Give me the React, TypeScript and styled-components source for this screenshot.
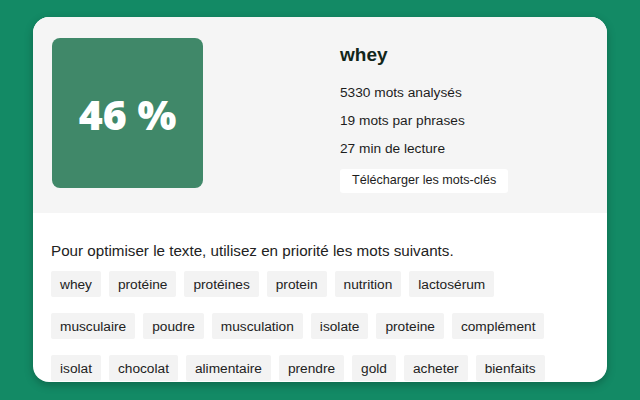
import React from "react";
import styled, { createGlobalStyle } from "styled-components";

const GlobalStyle = createGlobalStyle`
  html, body {
    margin: 0;
    padding: 0;
    background: #138a65;
    font-family: "Liberation Sans", Arial, sans-serif;
  }
`;

const StyledPage = styled.div`
  width: 640px;
  height: 400px;
  padding: 17px 33px 18px 33px;
  box-sizing: border-box;
`;

const StyledCard = styled.div`
  width: 574px;
  height: 365px;
  border-radius: 16px;
  overflow: hidden;
  background: #fff;
  box-shadow: 0 3px 8px rgba(0, 0, 0, 0.25);
  display: flex;
  flex-direction: column;
`;

const StyledTop = styled.div`
  display: flex;
  align-items: flex-start;
  height: 196px;
  box-sizing: border-box;
  flex-shrink: 0;
  background: #f5f5f5;
  padding: 21px 19px 0 19px;
  gap: 137px;
`;

const StyledScore = styled.div`
  width: 151px;
  height: 150px;
  border-radius: 8px;
  background: #408869;
  color: #fff;
  display: flex;
  align-items: center;
  justify-content: center;
  font-family: "Open Sans", sans-serif;
  font-weight: 800;
  font-size: 41px;
  padding-top: 2px;
  box-sizing: border-box;
`;

const StyledInfo = styled.div`
  display: flex;
  flex-direction: column;
  padding-top: 6px;
  color: #1d1d1d;
  & > h2 {
    margin: 0 0 18px 0;
    font-size: 19px;
    font-weight: 700;
    color: #12261a;
  }
  & > p {
    margin: 0 0 11px 0;
    font-size: 13.7px;
    line-height: 17px;
  }
`;

const StyledButton = styled.button`
  align-self: flex-start;
  margin-top: 1px;
  border: none;
  background: #fff;
  border-radius: 3px;
  padding: 4px 12px 5px 12px;
  font-family: "Liberation Sans", Arial, sans-serif;
  font-size: 12.6px;
  line-height: 15px;
  color: #1d1d1d;
`;

const StyledBottom = styled.div`
  padding: 29px 40px 0 18px;
  & > p {
    margin: 0 0 12px 0;
    font-size: 15.2px;
    line-height: 17px;
    color: #222;
  }
`;

const StyledTags = styled.div`
  display: flex;
  flex-wrap: wrap;
  column-gap: 8px;
  row-gap: 16px;
`;

const StyledTag = styled.span`
  display: inline-flex;
  align-items: center;
  height: 26px;
  padding: 0 9px;
  background: #f3f3f3;
  border-radius: 2px;
  font-size: 13.7px;
  color: #222;
`;

const words = [
  "whey",
  "protéine",
  "protéines",
  "protein",
  "nutrition",
  "lactosérum",
  "musculaire",
  "poudre",
  "musculation",
  "isolate",
  "proteine",
  "complément",
  "isolat",
  "chocolat",
  "alimentaire",
  "prendre",
  "gold",
  "acheter",
  "bienfaits",
];

const App = () => {
  return (
    <>
      <GlobalStyle />
      <StyledPage>
        <StyledCard>
          <StyledTop>
            <StyledScore>46 %</StyledScore>
            <StyledInfo>
              <h2>whey</h2>
              <p>5330 mots analysés</p>
              <p>19 mots par phrases</p>
              <p>27 min de lecture</p>
              <StyledButton>Télécharger les mots-clés</StyledButton>
            </StyledInfo>
          </StyledTop>
          <StyledBottom>
            <p>Pour optimiser le texte, utilisez en priorité les mots suivants.</p>
            <StyledTags>
              {words.map((w) => (
                <StyledTag key={w}>{w}</StyledTag>
              ))}
            </StyledTags>
          </StyledBottom>
        </StyledCard>
      </StyledPage>
    </>
  );
};

export default App;
